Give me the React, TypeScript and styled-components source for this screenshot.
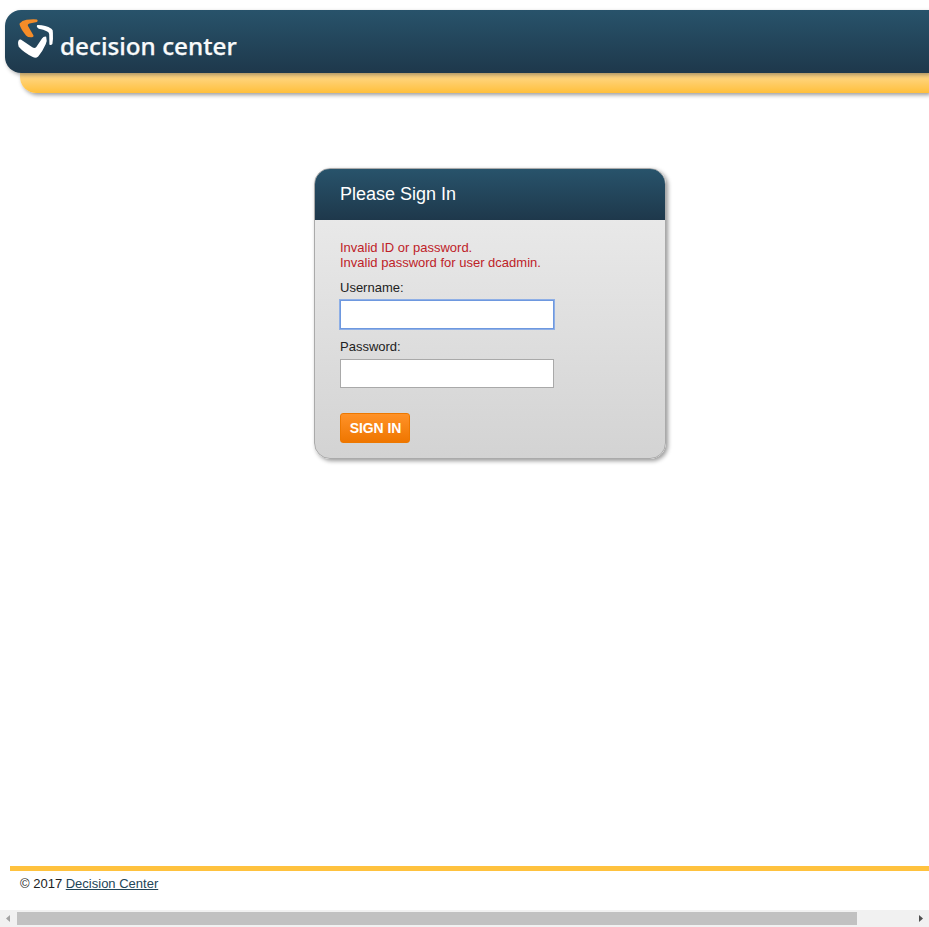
import React from "react";
import styled, { createGlobalStyle } from "styled-components";

const GlobalStyle = createGlobalStyle`
  * { box-sizing: border-box; }
  html, body { margin: 0; padding: 0; overflow: hidden; background: #fff; }
  body { font: 13px/15px "Liberation Sans", Arial, sans-serif; color: #222; }
`;

const Page = styled.div`
  display: flex;
  flex-direction: column;
  height: 927px;
  width: 929px;
  padding-top: 10px;
  overflow: hidden;
`;

const Header = styled.header`
  position: relative;
  z-index: 1;
  flex: none;
  display: flex;
  height: 63px;
  margin-left: 5px;
  padding: 8px 0 0 12px;
  border-radius: 16px 0 0 16px;
  background: linear-gradient(#28536b, #1e384b);
  box-shadow: 2px 2px 4px rgba(0, 0, 0, 0.35);
`;

const Logo = styled.svg`
  flex: none;
  width: 38px;
  height: 42px;
`;

const Brand = styled.h1`
  margin: 13px 0 0 5px;
  color: #f8fafb;
  font: 500 23px/30px "Noto Sans", "Open Sans", sans-serif;
  -webkit-text-stroke: 0.25px #f8fafb;
  transform: scaleX(1.055);
  transform-origin: 0 0;
  white-space: nowrap;
`;

const AccentBar = styled.div`
  flex: none;
  height: 20px;
  margin-left: 20px;
  border-radius: 0 0 0 16px;
  background: linear-gradient(#ffdb91, #ffbf3b);
  box-shadow: 2px 2px 4px rgba(0, 0, 0, 0.4);
`;

const Main = styled.main`
  flex: 1;
  padding: 75px 0 0 314px;
`;

const Card = styled.form`
  width: 352px;
  height: 291px;
  border: 1px solid #aaa;
  border-radius: 16px;
  background: linear-gradient(#ededed, #d3d3d3);
  box-shadow: 2px 2px 4px rgba(0, 0, 0, 0.4);
  overflow: hidden;
`;

const CardTitle = styled.h2`
  height: 51px;
  margin: 0;
  padding-left: 25px;
  background: linear-gradient(#28536b, #1e384b);
  color: #fff;
  font-size: 18px;
  font-weight: 400;
  line-height: 50px;
`;

const CardBody = styled.div`
  display: flex;
  flex-direction: column;
  align-items: flex-start;
  padding: 20px 25px 0;
`;

const ErrorMessage = styled.p`
  margin: 0 0 10px;
  color: #be2228;
`;

const FieldLabel = styled.label`
  margin-bottom: 5px;
`;

const Field = styled.input<{ $active?: boolean }>`
  display: block;
  width: 214px;
  height: 29px;
  margin: 0 0 10px;
  padding: 0 5px;
  border: 1px solid ${(p) => (p.$active ? "#6e98df" : "#a9a9a9")};
  background: #fff;
  box-shadow: ${(p) => (p.$active ? "0 0 0 1px #8eafe6" : "none")};
  border-radius: 0;
  outline: none;
`;

const SignInButton = styled.button`
  width: 70px;
  height: 30px;
  margin-top: 15px;
  padding: 0 0 0 1px;
  border: 1px solid #ed7800;
  border-radius: 3px;
  background: linear-gradient(#ff9228, #ef7600);
  color: #fff;
  font: bold 14px/28px "Liberation Sans", Arial, sans-serif;
  letter-spacing: -0.1px;
  white-space: nowrap;
`;

const Footer = styled.footer`
  flex: none;
  height: 44px;
  margin-left: 10px;
  padding: 5px 10px;
  border-top: 5px solid #ffc23e;
`;

const FooterLink = styled.a`
  color: #234658;
  text-decoration: underline;
`;

const ScrollBar = styled.div`
  flex: none;
  display: grid;
  grid-template-columns: 17px 840px 1fr;
  align-items: center;
  height: 17px;
  background: #f1f1f1;
`;

const ScrollThumb = styled.div`
  height: 13px;
  background: #c1c1c1;
`;

const ScrollArrow = styled.svg<{ $end?: boolean }>`
  width: 4px;
  height: 7px;
  justify-self: ${(p) => (p.$end ? "end" : "start")};
  margin: ${(p) => (p.$end ? "0 6px 0 0" : "0 0 0 6px")};
`;

export default function App() {
  return (
    <>
      <GlobalStyle />
      <Page>
        <Header>
          <Logo viewBox="17 18 38 42" aria-hidden="true">
            <path fill="#f58c28" d="M19.6 23.4Q22 20.7 26.5 19.8Q32 18.9 37 19.4Q38.5 20.7 37 22L29.5 23.4Q27.2 24 28 26L33.5 35.6Q33.8 37.2 32 37.3Q28 37.7 26 35.4Q21 29.5 19.6 24.8Z" />
            <path fill="#fff" d="M37.3 25.1Q45.5 24.9 51.4 28.8Q53.2 29.8 52.9 33Q53.3 39 52.4 44Q50.8 45.7 49.4 44.4L49.2 34.2Q49 32.3 47.2 31.6Q43.5 29.5 38.8 28.8Q35.8 26.9 37.3 25.1Z" />
            <path fill="#fff" d="M18.1 44C17.7 40.8 19.2 38.7 21.2 39.8L32.3 47.2Q34.7 48.9 36.3 46.9L42 38.6Q43.6 36.2 46.2 36.7Q47.4 40.6 45.7 44.2Q42.5 51.5 38.2 56.4Q36 58.6 32.8 57.1Q24 52.8 18.7 46.8Z" />
          </Logo>
          <Brand>decision center</Brand>
        </Header>
        <AccentBar />
        <Main>
          <Card onSubmit={(e) => e.preventDefault()}>
            <CardTitle>Please Sign In</CardTitle>
            <CardBody>
              <ErrorMessage>
                Invalid ID or password.
                <br />
                Invalid password for user dcadmin.
              </ErrorMessage>
              <FieldLabel htmlFor="username">Username:</FieldLabel>
              <Field id="username" type="text" $active />
              <FieldLabel htmlFor="password">Password:</FieldLabel>
              <Field id="password" type="password" />
              <SignInButton type="submit">SIGN IN</SignInButton>
            </CardBody>
          </Card>
        </Main>
        <Footer>
          © 2017 <FooterLink href="#">Decision Center</FooterLink>
        </Footer>
        <ScrollBar aria-hidden="true">
          <ScrollArrow viewBox="0 0 4 7">
            <path fill="#a3a3a3" d="M4 0V7L0 3.5Z" />
          </ScrollArrow>
          <ScrollThumb />
          <ScrollArrow viewBox="0 0 4 7" $end>
            <path fill="#505050" d="M0 0V7L4 3.5Z" />
          </ScrollArrow>
        </ScrollBar>
      </Page>
    </>
  );
}
